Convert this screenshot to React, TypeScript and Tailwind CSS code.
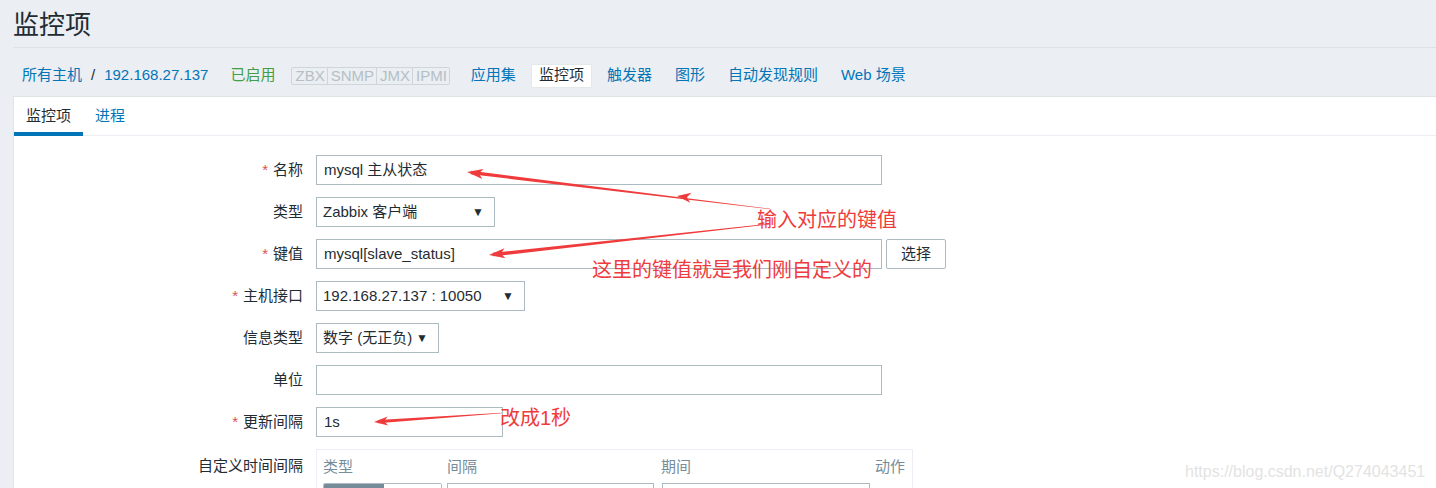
import React from "react";

const FONT = { fontFamily: '"Liberation Sans", Arial, "Noto Sans CJK SC", sans-serif' };
const RED = "#ef3b3b";

type P = [number, number];

function arrowPolys(head: P, tail: P, headLen = 16, headW = 5, baseW = 1.8, tailW = 0.3) {
  const dx = tail[0] - head[0];
  const dy = tail[1] - head[1];
  const len = Math.hypot(dx, dy);
  const ux = dx / len;
  const uy = dy / len;
  const nx = -uy;
  const ny = ux;
  const bx = head[0] + ux * headLen;
  const by = head[1] + uy * headLen;
  const shaft = [
    [head[0] + ux * 4 + nx * baseW, head[1] + uy * 4 + ny * baseW],
    [tail[0] + nx * tailW, tail[1] + ny * tailW],
    [tail[0] - nx * tailW, tail[1] - ny * tailW],
    [head[0] + ux * 4 - nx * baseW, head[1] + uy * 4 - ny * baseW],
  ]
    .map((p) => p.join(","))
    .join(" ");
  const tip = [
    [head[0], head[1]],
    [bx + nx * headW, by + ny * headW],
    [head[0] + ux * (headLen - 4), head[1] + uy * (headLen - 4)],
    [bx - nx * headW, by - ny * headW],
  ]
    .map((p) => p.join(","))
    .join(" ");
  return { shaft, tip };
}

function headOnly(head: P, dir: P, headLen = 14, headW = 5) {
  const len = Math.hypot(dir[0], dir[1]);
  const ux = dir[0] / len;
  const uy = dir[1] / len;
  const nx = -uy;
  const ny = ux;
  const bx = head[0] + ux * headLen;
  const by = head[1] + uy * headLen;
  return [
    [head[0], head[1]],
    [bx + nx * headW, by + ny * headW],
    [head[0] + ux * (headLen - 4), head[1] + uy * (headLen - 4)],
    [bx - nx * headW, by - ny * headW],
  ]
    .map((p) => p.join(","))
    .join(" ");
}

const a1 = arrowPolys([467, 172], [770, 209]);
const a1mid = headOnly([677, 196], [770 - 467, 209 - 172], 14, 5);
const a2 = arrowPolys([489, 255], [770, 224]);
const a3 = arrowPolys([374, 422], [502, 413], 14, 4.5, 1.6, 0.3);

function Caret() {
  return <span className="text-[12px] leading-none text-[#1f2c33]">▼</span>;
}

function Label({ text, req }: { text: string; req?: boolean }) {
  return (
    <div className="w-[302px] shrink-0 pr-[13px] text-right text-[15px] text-[#1f2c33]">
      {req && <span className="text-[#e05050] mr-[5px]">*</span>}
      {text}
    </div>
  );
}

function Row({ children }: { children: React.ReactNode }) {
  return <div className="flex items-center h-[30px] mb-[12px]">{children}</div>;
}

function TextBox({ w, value }: { w: string; value?: string }) {
  return (
    <div
      className={`${w} h-[30px] border border-[#acbbc2] bg-white flex items-center pl-[7px] text-[15px] text-[#1f2c33]`}
    >
      {value}
    </div>
  );
}

function Select({ w, value }: { w: string; value: string }) {
  return (
    <div
      className={`${w} h-[30px] border border-[#acbbc2] bg-white flex items-center justify-between pl-[6px] pr-[10px] text-[15px] text-[#1f2c33]`}
    >
      <span>{value}</span>
      <Caret />
    </div>
  );
}

export default function App() {
  return (
    <div className="relative w-[1436px] h-[488px] overflow-hidden bg-[#ebeef2]" style={FONT}>
      {/* Title */}
      <div className="ml-[13px] h-[48px] border-b border-[#dde2e6] flex items-center">
        <h1 className="text-[26px] text-[#1f2c33] leading-none mt-[2px]">监控项</h1>
      </div>

      {/* Breadcrumb / nav */}
      <div className="h-[48px] flex items-center pt-[7px] pl-[22px] text-[15px]">
        <span className="text-[#0275b8]">所有主机</span>
        <span className="text-[#1f2c33] mx-[9px]">/</span>
        <span className="text-[#0275b8]">192.168.27.137</span>
        <span className="text-[#429e47] ml-[22px]">已启用</span>
        <div className="ml-[16px] flex h-[18px] border border-[#cfd6da] rounded-[2px] text-[15px] leading-[16px] text-[#b4c0c6]">
          <span className="pl-[3px] pr-[2px] border-r border-[#cfd6da]">ZBX</span>
          <span className="pl-[3px] pr-[2px] border-r border-[#cfd6da]">SNMP</span>
          <span className="pl-[3px] pr-[2px] border-r border-[#cfd6da]">JMX</span>
          <span className="pl-[3px] pr-[2px]">IPMI</span>
        </div>
        <div className="ml-[13px] flex items-center gap-[7px]">
          <span className="px-2 text-[#0275b8]">应用集</span>
          <span className="px-[7px] h-[24px] flex items-center bg-white rounded-[2px] border border-[#e3e8eb] text-[#1f2c33]">
            监控项
          </span>
          <span className="px-2 text-[#0275b8]">触发器</span>
          <span className="px-2 text-[#0275b8]">图形</span>
          <span className="px-2 text-[#0275b8]">自动发现规则</span>
          <span className="px-2 text-[#0275b8]">Web 场景</span>
        </div>
      </div>

      {/* Panel */}
      <div className="ml-[13px] bg-white border-t border-l border-[#dfe4e7] h-[400px]">
        <div className="flex h-[39px] border-b border-[#ebeef2] text-[15px]">
          <div className="px-[12px] flex items-center border-b-[4px] border-[#0275b8] -mb-[1px] pt-[4px] text-[#1f2c33]">
            监控项
          </div>
          <div className="px-[12px] flex items-center text-[#0275b8]">进程</div>
        </div>

        <div className="pt-[19px]">
          <Row>
            <Label text="名称" req />
            <TextBox w="w-[566px]" value="mysql 主从状态" />
          </Row>
          <Row>
            <Label text="类型" />
            <Select w="w-[179px]" value="Zabbix 客户端" />
          </Row>
          <Row>
            <Label text="键值" req />
            <TextBox w="w-[566px]" value="mysql[slave_status]" />
            <div className="ml-[4px] w-[60px] h-[30px] border border-[#acbbc2] rounded-[2px] bg-white flex items-center justify-center text-[15px] text-[#1f2c33]">
              选择
            </div>
          </Row>
          <Row>
            <Label text="主机接口" req />
            <Select w="w-[209px]" value="192.168.27.137 : 10050" />
          </Row>
          <Row>
            <Label text="信息类型" />
            <Select w="w-[123px]" value="数字 (无正负)" />
          </Row>
          <Row>
            <Label text="单位" />
            <TextBox w="w-[566px]" />
          </Row>
          <Row>
            <Label text="更新间隔" req />
            <TextBox w="w-[187px]" value="1s" />
          </Row>
          <div className="flex items-start">
            <div className="pt-[6px]">
              <Label text="自定义时间间隔" />
            </div>
            <div className="w-[597px] border border-[#ebeef2] pl-[6px] pt-[6px] h-[60px]">
              <div className="flex text-[15px] text-[#768d99] h-[22px] items-center">
                <span className="w-[124px]">类型</span>
                <span className="w-[214px]">间隔</span>
                <span className="w-[214px]">期间</span>
                <span>动作</span>
              </div>
              <div className="flex mt-[5px]">
                <div className="w-[119px] h-[24px] flex border border-[#acbbc2] rounded-[2px] overflow-hidden">
                  <div className="w-[60px] bg-[#768d99]" />
                  <div className="flex-1 bg-white" />
                </div>
                <div className="ml-[5px] w-[207px] h-[24px] border border-[#acbbc2]" />
                <div className="ml-[8px] w-[208px] h-[24px] border border-[#acbbc2]" />
              </div>
            </div>
          </div>
        </div>
      </div>

      {/* Annotations overlay */}
      <svg className="absolute left-0 top-0 pointer-events-none" width="1436" height="488">
        <polygon points={a1.shaft} fill={RED} />
        <polygon points={a1.tip} fill={RED} />
        <polygon points={a1mid} fill={RED} />
        <polygon points={a2.shaft} fill={RED} />
        <polygon points={a2.tip} fill={RED} />
        <polygon points={a3.shaft} fill={RED} />
        <polygon points={a3.tip} fill={RED} />
      </svg>
      <span className="absolute left-[757px] top-[207px] text-[20px] leading-[26px] text-[#ef3b3b]">
        输入对应的键值
      </span>
      <span className="absolute left-[592px] top-[257px] text-[20px] leading-[26px] text-[#ef3b3b]">
        这里的键值就是我们刚自定义的
      </span>
      <span className="absolute left-[500px] top-[405px] text-[20px] leading-[26px] text-[#ef3b3b]">
        改成1秒
      </span>

      {/* Watermark */}
      <span
        className="absolute left-[1185px] top-[460px] text-[16px] text-[#e3e3e3]"
        style={{ textShadow: "0 0 1px #ffffff" }}
      >
        https://blog.csdn.net/Q274043451
      </span>
    </div>
  );
}
